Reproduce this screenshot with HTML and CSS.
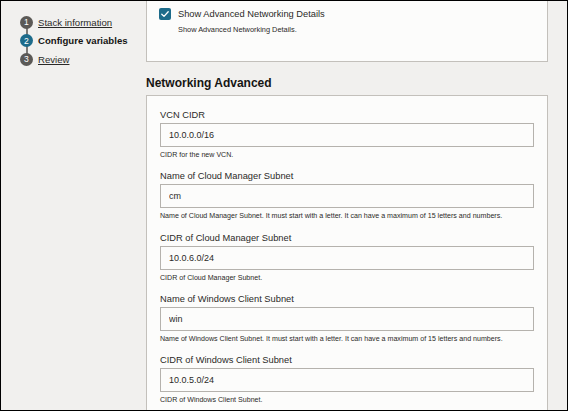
FILE: index.html
```html
<!DOCTYPE html>
<html lang="en">
<head>
<meta charset="utf-8">
<title>Configure variables</title>
<link rel="stylesheet" href="styles.css">
</head>
<body>
<div class="frame">
  <nav class="steps">
    <ol>
      <li class="step"><span class="num">1</span><a class="step-link" href="#">Stack information</a></li>
      <li class="step current"><span class="num">2</span><span class="step-text">Configure variables</span></li>
      <li class="step"><span class="num">3</span><a class="step-link" href="#">Review</a></li>
    </ol>
  </nav>
  <main class="content">
    <section class="card card--cut">
      <label class="check">
        <span class="box"><svg width="12" height="12" viewBox="0 0 12 12"><polyline points="2.8,6.3 5,8.4 9.2,3.7" fill="none" stroke="#fff" stroke-width="1.3" stroke-linecap="round" stroke-linejoin="round"/></svg></span>
        <span>Show Advanced Networking Details</span>
      </label>
      <p class="check-help">Show Advanced Networking Details.</p>
    </section>
    <h2 class="section-title">Networking Advanced</h2>
    <section class="card card--fields">
      <div class="field">
        <label class="field-label">VCN CIDR</label>
        <input class="input" type="text" value="10.0.0.0/16">
        <p class="help">CIDR for the new VCN.</p>
      </div>
      <div class="field">
        <label class="field-label">Name of Cloud Manager Subnet</label>
        <input class="input" type="text" value="cm">
        <p class="help">Name of Cloud Manager Subnet. It must start with a letter. It can have a maximum of 15 letters and numbers.</p>
      </div>
      <div class="field">
        <label class="field-label">CIDR of Cloud Manager Subnet</label>
        <input class="input" type="text" value="10.0.6.0/24">
        <p class="help">CIDR of Cloud Manager Subnet.</p>
      </div>
      <div class="field">
        <label class="field-label">Name of Windows Client Subnet</label>
        <input class="input" type="text" value="win">
        <p class="help">Name of Windows Client Subnet. It must start with a letter. It can have a maximum of 15 letters and numbers.</p>
      </div>
      <div class="field">
        <label class="field-label">CIDR of Windows Client Subnet</label>
        <input class="input" type="text" value="10.0.5.0/24">
        <p class="help">CIDR of Windows Client Subnet.</p>
      </div>
    </section>
  </main>
</div>
</body>
</html>
```

FILE: styles.css
```css
* { box-sizing: border-box; }
html, body { margin: 0; padding: 0; }
body {
  font-family: "Liberation Sans", Arial, sans-serif;
  color: #2b2a28;
  background: #f1f0ee;
}
.frame {
  width: 568px;
  height: 411px;
  border: 1px solid #000;
  display: flex;
  overflow: hidden;
  background: #f1f0ee;
}
.steps {
  width: 145px;
  flex: none;
  padding: 12px 0 0 19px;
}
.steps ol { list-style: none; margin: 0; padding: 0; }
.step {
  position: relative;
  display: flex;
  align-items: center;
  gap: 5px;
  height: 18.5px;
  font-size: 9.6px;
}
.step + .step::before {
  content: "";
  position: absolute;
  left: 5.5px;
  top: -4px;
  width: 2px;
  height: 8px;
  background: #7d7a77;
}
.num {
  position: relative;
  z-index: 1;
  width: 13px;
  height: 13px;
  border-radius: 50%;
  background: #5b5956;
  color: #fff;
  font-size: 8.6px;
  display: flex;
  align-items: center;
  justify-content: center;
}
.step.current .num { background: #1d6b8a; }
.step-link { color: #2b2a28; text-decoration: underline; }
.step-text { font-weight: bold; color: #161513; }

.content { width: 402px; flex: none; }
.card {
  background: #fcfcfb;
  border: 1px solid #c3c0bb;
}
.card--cut {
  border-top: 0;
  height: 61px;
  padding: 7px 12px 0;
}
.check {
  display: flex;
  align-items: center;
  gap: 7px;
  height: 12px;
  font-size: 9.3px;
  color: #2b2a28;
}
.box {
  width: 12px;
  height: 12px;
  border-radius: 2px;
  background: #1d6b8a;
  display: flex;
}
.check-help {
  margin: 5px 0 0 19px;
  font-size: 7.4px;
  line-height: 9px;
}
.section-title {
  font-size: 12px;
  font-weight: bold;
  line-height: 16px;
  margin: 13px 0 4px;
  color: #161513;
}
.card--fields { padding: 13px 13px 20px; }
.field { margin-bottom: 10.3px; }
.field-label {
  display: block;
  font-size: 9.3px;
  line-height: 12px;
  margin-bottom: 2px;
}
.input {
  display: block;
  width: 374px;
  height: 24px;
  margin: 0;
  border: 1px solid #b5b2ad;
  border-radius: 0;
  background: #fcfcfb;
  padding: 0 8px;
  font-family: "Liberation Sans", Arial, sans-serif;
  font-size: 9px;
  color: #2b2a28;
}
.help {
  font-size: 7.1px;
  line-height: 10px;
  margin: 3px 0 0;
}
```
